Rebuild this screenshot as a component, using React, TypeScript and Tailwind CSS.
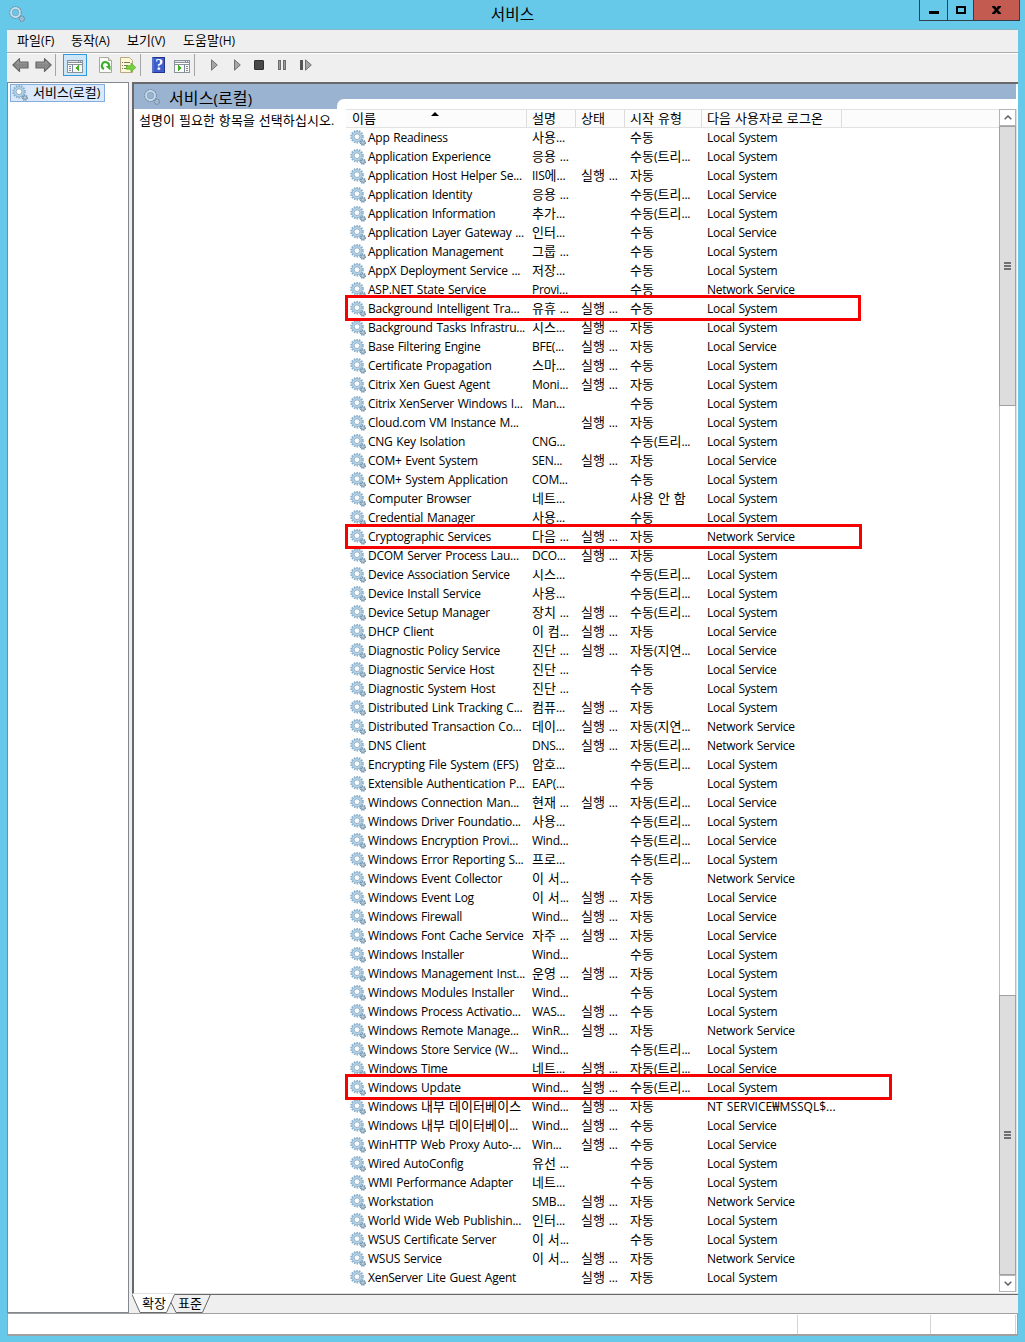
import React from "react";

type Row = [string, string, number, string, string];

const S = "Local System";
const L = "Local Service";
const N = "Network Service";
const T = "수동(트리...";
const A = "자동(트리...";
const D = "자동(지연...";

const rows: Row[] = [
  ["App Readiness", "사용...", 0, "수동", S],
  ["Application Experience", "응용 ...", 0, T, S],
  ["Application Host Helper Se...", "IIS에...", 1, "자동", S],
  ["Application Identity", "응용 ...", 0, T, L],
  ["Application Information", "추가...", 0, T, S],
  ["Application Layer Gateway ...", "인터...", 0, "수동", L],
  ["Application Management", "그룹 ...", 0, "수동", S],
  ["AppX Deployment Service ...", "저장...", 0, "수동", S],
  ["ASP.NET State Service", "Provi...", 0, "수동", N],
  ["Background Intelligent Tra...", "유휴 ...", 1, "수동", S],
  ["Background Tasks Infrastru...", "시스...", 1, "자동", S],
  ["Base Filtering Engine", "BFE(...", 1, "자동", L],
  ["Certificate Propagation", "스마...", 1, "수동", S],
  ["Citrix Xen Guest Agent", "Moni...", 1, "자동", S],
  ["Citrix XenServer Windows I...", "Man...", 0, "수동", S],
  ["Cloud.com VM Instance M...", "", 1, "자동", S],
  ["CNG Key Isolation", "CNG...", 0, T, S],
  ["COM+ Event System", "SEN...", 1, "자동", L],
  ["COM+ System Application", "COM...", 0, "수동", S],
  ["Computer Browser", "네트...", 0, "사용 안 함", S],
  ["Credential Manager", "사용...", 0, "수동", S],
  ["Cryptographic Services", "다음 ...", 1, "자동", N],
  ["DCOM Server Process Lau...", "DCO...", 1, "자동", S],
  ["Device Association Service", "시스...", 0, T, S],
  ["Device Install Service", "사용...", 0, T, S],
  ["Device Setup Manager", "장치 ...", 1, T, S],
  ["DHCP Client", "이 컴...", 1, "자동", L],
  ["Diagnostic Policy Service", "진단 ...", 1, D, L],
  ["Diagnostic Service Host", "진단 ...", 0, "수동", L],
  ["Diagnostic System Host", "진단 ...", 0, "수동", S],
  ["Distributed Link Tracking C...", "컴퓨...", 1, "자동", S],
  ["Distributed Transaction Co...", "데이...", 1, D, N],
  ["DNS Client", "DNS...", 1, A, N],
  ["Encrypting File System (EFS)", "암호...", 0, T, S],
  ["Extensible Authentication P...", "EAP(...", 0, "수동", S],
  ["Windows Connection Man...", "현재 ...", 1, A, L],
  ["Windows Driver Foundatio...", "사용...", 0, T, S],
  ["Windows Encryption Provi...", "Wind...", 0, T, L],
  ["Windows Error Reporting S...", "프로...", 0, T, S],
  ["Windows Event Collector", "이 서...", 0, "수동", N],
  ["Windows Event Log", "이 서...", 1, "자동", L],
  ["Windows Firewall", "Wind...", 1, "자동", L],
  ["Windows Font Cache Service", "자주 ...", 1, "자동", L],
  ["Windows Installer", "Wind...", 0, "수동", S],
  ["Windows Management Inst...", "운영 ...", 1, "자동", S],
  ["Windows Modules Installer", "Wind...", 0, "수동", S],
  ["Windows Process Activatio...", "WAS...", 1, "수동", S],
  ["Windows Remote Manage...", "WinR...", 1, "자동", N],
  ["Windows Store Service (W...", "Wind...", 0, T, S],
  ["Windows Time", "네트...", 1, A, L],
  ["Windows Update", "Wind...", 1, T, S],
  ["Windows 내부 데이터베이스", "Wind...", 1, "자동", "NT SERVICE₩MSSQL$..."],
  ["Windows 내부 데이터베이...", "Wind...", 1, "수동", L],
  ["WinHTTP Web Proxy Auto-...", "Win...", 1, "수동", L],
  ["Wired AutoConfig", "유선 ...", 0, "수동", S],
  ["WMI Performance Adapter", "네트...", 0, "수동", S],
  ["Workstation", "SMB...", 1, "자동", N],
  ["World Wide Web Publishin...", "인터...", 1, "자동", S],
  ["WSUS Certificate Server", "이 서...", 0, "수동", S],
  ["WSUS Service", "이 서...", 1, "자동", N],
  ["XenServer Lite Guest Agent", "", 1, "자동", S],
];

/* Hangul runs are set one size larger than Latin runs so both scripts share the same visual height. */
function Txt({ children }: { children: string }) {
  return (
    <>
      {children.split(/([가-힣]+|₩)/).map((part, i) =>
        i % 2 ? (
          <span key={i} className="text-[1.0833em] tracking-[0.1px]">
            {part}
          </span>
        ) : (
          part
        ),
      )}
    </>
  );
}

function Gear({ className }: { className?: string }) {
  return (
    <svg viewBox="0 0 16 16" className={className}>
      <circle cx="7" cy="6.700" r="5.800" fill="none" stroke="#86acc7" strokeWidth="2" strokeDasharray="1.500 1.100" />
      <circle cx="7" cy="6.700" r="4.100" fill="none" stroke="#b3d4e9" strokeWidth="2.400" />
      <circle cx="7" cy="6.700" r="5.100" fill="none" stroke="#8fb4ce" strokeWidth=".8" />
      <circle cx="7" cy="6.700" r="2.900" fill="#fbfdfe" stroke="#7d9db6" strokeWidth=".8" />
      <circle cx="12.900" cy="12.700" r="2.300" fill="#a9c8dc" stroke="#6f90a9" strokeWidth="1.700" strokeDasharray="1.100 .706" />
      <circle cx="12.900" cy="12.700" r=".9" fill="#f4f9fc" stroke="#7896ad" strokeWidth=".5" />
    </svg>
  );
}

function BigGear({ className }: { className?: string }) {
  return (
    <svg viewBox="0 0 16 16" className={className}>
      <circle cx="6.500" cy="6.500" r="5" fill="none" stroke="#7590a6" strokeWidth="2.800" strokeDasharray="1.500 .744" />
      <circle cx="6.500" cy="6.500" r="4.400" fill="none" stroke="#c9dfee" strokeWidth="2" />
      <circle cx="6.500" cy="6.500" r="3.300" fill="none" stroke="#7f9bb1" strokeWidth=".6" />
      <circle cx="12.900" cy="12.700" r="2" fill="none" stroke="#7089a0" strokeWidth="2.200" strokeDasharray="1.100 .47" />
      <circle cx="12.900" cy="12.700" r="1.500" fill="none" stroke="#bdd5e5" strokeWidth=".9" />
    </svg>
  );
}

function Sep() {
  return <div className="h-[22px] w-px bg-[#a5a5a5]" />;
}

function Arrow({ flip = false }: { flip?: boolean }) {
  return (
    <svg viewBox="0 0 17 16" className={flip ? "h-4 w-[17px] -scale-x-100" : "h-4 w-[17px]"}>
      <defs>
        <linearGradient id="arrowFill" x1="0" y1="0" x2="0" y2="1">
          <stop offset="0" stopColor="#b8b8b8" />
          <stop offset=".5" stopColor="#858585" />
          <stop offset="1" stopColor="#a0a0a0" />
        </linearGradient>
      </defs>
      <path d="M.9 8 7.500 1.600V5h8.500v6H7.500v3.400Z" fill="url(#arrowFill)" stroke="#666" strokeWidth="1.200" strokeLinejoin="round" />
    </svg>
  );
}

function PaneIcon({ right = false }: { right?: boolean }) {
  return (
    <svg viewBox="0 0 16 13" className="h-[13px] w-4" shapeRendering="crispEdges">
      <path d="M0 0h16v13H0z" fill="#8a929c" />
      <path d="M1 1h10v1H1zM12 1h1v1h-1zM14 1h1v1h-1z" fill="#dfe5ea" />
      <path d="M1 3h14v1H1z" fill="#fff" />
      <path d="M1 5h14v7H1z" fill="#f9f9f9" />
      {right ? (
        <>
          <path d="M10 5h1v7h-1zM12 6h2v1h-2zM12 8h2v1h-2zM12 10h2v1h-2z" fill="#7b8793" />
          <path d="M4 5v6h1v-1h1V9h1V8h1V8H7V7H6V6H5V5z" fill="#3fb01e" />
        </>
      ) : (
        <>
          <path d="M5 5h1v7H5zM2 6h2v1H2zM2 8h2v1H2zM2 10h2v1H2z" fill="#7b8793" />
          <path d="M12 5v6h-1v-1h-1V9H9V8H8h1V7h1V6h1V5z" fill="#3fb01e" />
        </>
      )}
    </svg>
  );
}

function RefreshIcon() {
  return (
    <svg viewBox="0 0 13 16" className="h-4 w-[13px]">
      <path d="M.5.5h9l3 3v12H.5z" fill="#fcfcf8" stroke="#a9a99c" />
      <path d="M9.5.5v3h3" fill="#e5e5dc" stroke="#a9a99c" />
      <path d="M5 12A3.600 3.600 0 1 1 10 9.300" fill="none" stroke="#3aad2c" strokeWidth="2" />
      <path d="M6.500 9h5v4.500z" fill="#3aad2c" />
    </svg>
  );
}

function ExportIcon() {
  return (
    <svg viewBox="0 0 16 16" className="h-4 w-4">
      <path d="M.5.5h9l3 3v12H.5z" fill="#fdf7d5" stroke="#b4a983" />
      <path d="M2 5.500h1M2 8.500h1M2 11.500h1M4 5.500h6M4 8.500h4M4 11.500h3" stroke="#7b7664" />
      <path d="M6.500 8.800h4.500V6l4.800 4.500L11 15v-2.800H6.500z" fill="#7ad13c" stroke="#4ba91e" strokeWidth=".7" />
    </svg>
  );
}

function HelpIcon() {
  return (
    <div className="flex h-4 w-[13px] items-center justify-center border border-[#20358a] border-l-2 border-l-[#5a70c8] bg-[#3f5ccc] pb-px font-['Liberation_Serif',serif] text-[16px] leading-none font-bold text-white">
      ?
    </div>
  );
}

function PlayIcon() {
  return (
    <svg viewBox="0 0 7 12" className="h-3 w-[7px]">
      <path d="M.5.8 6.300 6 .5 11.200z" fill="#a6a6a6" stroke="#727272" />
    </svg>
  );
}

function Grip() {
  return (
    <div className="flex flex-col gap-px">
      <div className="h-[2px] w-[7px] bg-[#707070]" />
      <div className="h-[2px] w-[7px] bg-[#707070]" />
      <div className="h-[2px] w-[7px] bg-[#707070]" />
    </div>
  );
}

function Chevron({ down = false }: { down?: boolean }) {
  return (
    <div className="flex h-[17px] w-full shrink-0 items-center justify-center border border-[#b4b4b4] bg-white">
      <svg viewBox="0 0 8 5" className={down ? "h-[5px] w-2 rotate-180" : "h-[5px] w-2"}>
        <path d="M.7 4.300 4 1l3.300 3.300" fill="none" stroke="#606060" strokeWidth="1.500" />
      </svg>
    </div>
  );
}

function Highlight({ className }: { className: string }) {
  return <div className={`pointer-events-none absolute border-[3px] border-[#f60000] ${className}`} />;
}

const headers: [string, string][] = [
  ["이름", "w-[181px] pl-[6px]"],
  ["설명", "w-[49px] pl-[5px]"],
  ["상태", "w-[49px] pl-[5px]"],
  ["시작 유형", "w-[77px] pl-[5px]"],
  ["다음 사용자로 로그온", "w-[140px] pl-[5px]"],
];

export default function App() {
  return (
    <div className="relative flex h-[1342px] w-[1025px] flex-col overflow-hidden bg-[#66c9ea] pr-[7px] pb-[6px] pl-[7px] font-['Open_Sans','Noto_Sans_CJK_KR',sans-serif] text-[12px] leading-[19px] tracking-[-0.25px] text-black [word-spacing:0.9px]">
      <header className="relative flex h-[29px] shrink-0 items-center justify-center">
        <BigGear className="absolute top-[6px] left-[2px] h-4 w-4" />
        <span className="text-[14.5px] leading-[28px]">
          <Txt>서비스</Txt>
        </span>
        <div className="absolute top-0 right-[-2px] flex h-[21px] w-[101px] border border-t-0 border-[#30404a]">
          <div className="flex w-[28px] justify-center border-r border-[#30404a] pt-[11px]">
            <div className="h-[3px] w-[10px] bg-black" />
          </div>
          <div className="flex w-[26px] justify-center border-r border-[#30404a] pt-[6px]">
            <div className="h-2 w-[10px] border-2 border-black" />
          </div>
          <div className="flex grow justify-center bg-[#c35b50] pt-[6px]">
            <svg viewBox="0 0 9 8" className="h-2 w-[9px]">
              <path d="M0 0h3l1.500 2L6 0h3v1L6 4l3 3v1H6L4.500 6 3 8H0V7l3-3-3-3z" />
            </svg>
          </div>
        </div>
      </header>

      <nav className="flex h-[24px] shrink-0 items-center border-t border-b border-t-[#86b6c8] border-b-[#aaaaaa] bg-[#efefef] pb-[2px] pl-[10px] tracking-[0px]">
        <span className="w-[54px]"><Txt>파일(F)</Txt></span>
        <span className="w-[56px]"><Txt>동작(A)</Txt></span>
        <span className="w-[56px]"><Txt>보기(V)</Txt></span>
        <span><Txt>도움말(H)</Txt></span>
      </nav>

      <div className="flex h-[29px] shrink-0 items-center border-t border-white bg-[#efefef] pb-[6px] pl-[5px]">
        <Arrow />
        <div className="w-[6px]" />
        <Arrow flip />
        <div className="w-[3px]" />
        <Sep />
        <div className="ml-[7px] flex h-[22px] w-6 items-center justify-center border border-[#3399dd] bg-[#cde6f8] pt-[3px]">
          <PaneIcon />
        </div>
        <div className="w-3" />
        <RefreshIcon />
        <div className="w-2" />
        <ExportIcon />
        <div className="w-1" />
        <Sep />
        <div className="w-[11px]" />
        <HelpIcon />
        <div className="w-[9px]" />
        <div className="pt-[3px]"><PaneIcon right /></div>
        <div className="w-1" />
        <Sep />
        <div className="w-4" />
        <PlayIcon />
        <div className="w-4" />
        <PlayIcon />
        <div className="w-[13px]" />
        <div className="h-[10px] w-[10px] rounded-[1px] border border-[#303030] bg-[#484848]" />
        <div className="ml-[14px] flex gap-[2px]">
          <div className="h-[10px] w-[3px] border border-[#6c6c6c] bg-[#9c9c9c]" />
          <div className="h-[10px] w-[3px] border border-[#6c6c6c] bg-[#9c9c9c]" />
        </div>
        <div className="ml-[14px] flex items-center gap-[2px]">
          <div className="h-[10px] w-[3px] bg-[#555]" />
          <PlayIcon />
        </div>
      </div>

      <div className="flex h-[1231px] shrink-0 bg-[#efefef]">
        <aside className="w-[122px] shrink-0 border border-[#828790] bg-white pt-px pl-[2px]">
          <div className="flex h-[18px] w-[95px] items-center border border-[#84acdd] bg-[#d9e8fb] pl-px">
            <Gear className="h-4 w-4" />
            <span className="mt-[-2px] ml-[5px] leading-4 tracking-[0px] whitespace-nowrap"><Txt>서비스(로컬)</Txt></span>
          </div>
        </aside>

        <div className="ml-[3px] flex min-w-0 grow flex-col">
          <main className="flex h-[1212px] shrink-0 flex-col border-t-2 border-b border-l-2 border-t-[#696969] border-b-[#dfdfdf] border-l-[#696969] bg-white">
            <div className="mr-[2px] flex h-[25px] shrink-0 bg-[#99b3d1]">
              <div className="flex w-[203px] items-center">
                <BigGear className="ml-[10px] h-4 w-4" />
                <span className="mt-1 ml-[9px] text-[14.8px] tracking-[0.1px]"><Txt>서비스(로컬)</Txt></span>
              </div>
              <div className="mt-[15px] grow rounded-tl-[7px] bg-white" />
            </div>
            <div className="flex min-h-0 grow">
              <section className="w-[212px] shrink-0 pt-[2px] pl-[5px] whitespace-nowrap">
                <Txt>설명이 필요한 항목을 선택하십시오.</Txt>
              </section>
              <section className="relative flex h-[1183px] grow">
                <div className="w-[653px] shrink-0">
                  <div className="relative flex h-[19px] border-t border-b border-[#e2e2e2] bg-[#fcfcfc]">
                    {headers.map(([label, w]) => (
                      <div key={label} className={`${w} shrink-0 border-r border-[#dcdcdc] leading-[17px] whitespace-nowrap`}>
                        <Txt>{label}</Txt>
                      </div>
                    ))}
                    <div className="absolute top-[2px] left-[85px] h-0 w-0 border-r-4 border-b-4 border-l-4 border-r-transparent border-b-black border-l-transparent" />
                  </div>
                  {rows.map(([name, desc, running, start, logon], i) => (
                    <div key={i} className="flex h-[19px] items-center leading-[19px] whitespace-pre">
                      <div className="flex w-[186px] shrink-0 items-center pl-1">
                        <Gear className="h-4 w-4 shrink-0" />
                        <span className="ml-[2px]"><Txt>{name}</Txt></span>
                      </div>
                      <span className="w-[49px] shrink-0"><Txt>{desc}</Txt></span>
                      <span className="w-[49px] shrink-0"><Txt>{running ? "실행 ..." : ""}</Txt></span>
                      <span className="w-[77px] shrink-0"><Txt>{start}</Txt></span>
                      <span className={logon.startsWith("NT") ? "tracking-[0.02px]" : ""}><Txt>{logon}</Txt></span>
                    </div>
                  ))}
                </div>
                <div className="flex w-[17px] shrink-0 flex-col">
                  <Chevron />
                  <div className="flex h-[280px] items-center justify-center border border-[#a0a0a0] bg-[#dddddd]"><Grip /></div>
                  <div className="grow border-r border-l border-[#bcbcbc]" />
                  <div className="flex h-[280px] items-center justify-center border border-[#a0a0a0] bg-[#dddddd]"><Grip /></div>
                  <Chevron down />
                </div>
                <div className="w-px bg-[#dfdfdf]" />
                <Highlight className="top-[186px] left-[-1px] h-[26px] w-[516px]" />
                <Highlight className="top-[415px] left-[-1px] h-[25px] w-[517px]" />
                <Highlight className="top-[965px] left-[-1px] h-[26px] w-[547px]" />
              </section>
            </div>
          </main>
          <footer className="relative h-[19px]">
            <svg viewBox="0 0 886 19" className="absolute inset-0 h-[19px] w-[886px]">
              <path d="M0 0h43l-8 18H8z" fill="#fff" />
              <path d="M0 .500 8 18.500H34.500L42.500.500H886M39 8.500 44 18.500H70.500L78.500.500" fill="none" stroke="#696969" />
            </svg>
            <div className="relative flex h-[18px] items-center pl-[10px]">
              <span className="w-[36px]"><Txt>확장</Txt></span>
              <span><Txt>표준</Txt></span>
            </div>
          </footer>
        </div>
      </div>

      <div className="flex h-[23px] shrink-0 border border-b-2 border-[#a0a0a0] bg-white pt-px">
        <div className="w-[790px] border-r border-[#d5d5d5]" />
        <div className="w-[133px] border-r border-[#d5d5d5]" />
        <div className="w-[85px] border-r border-[#d5d5d5]" />
      </div>
    </div>
  );
}
